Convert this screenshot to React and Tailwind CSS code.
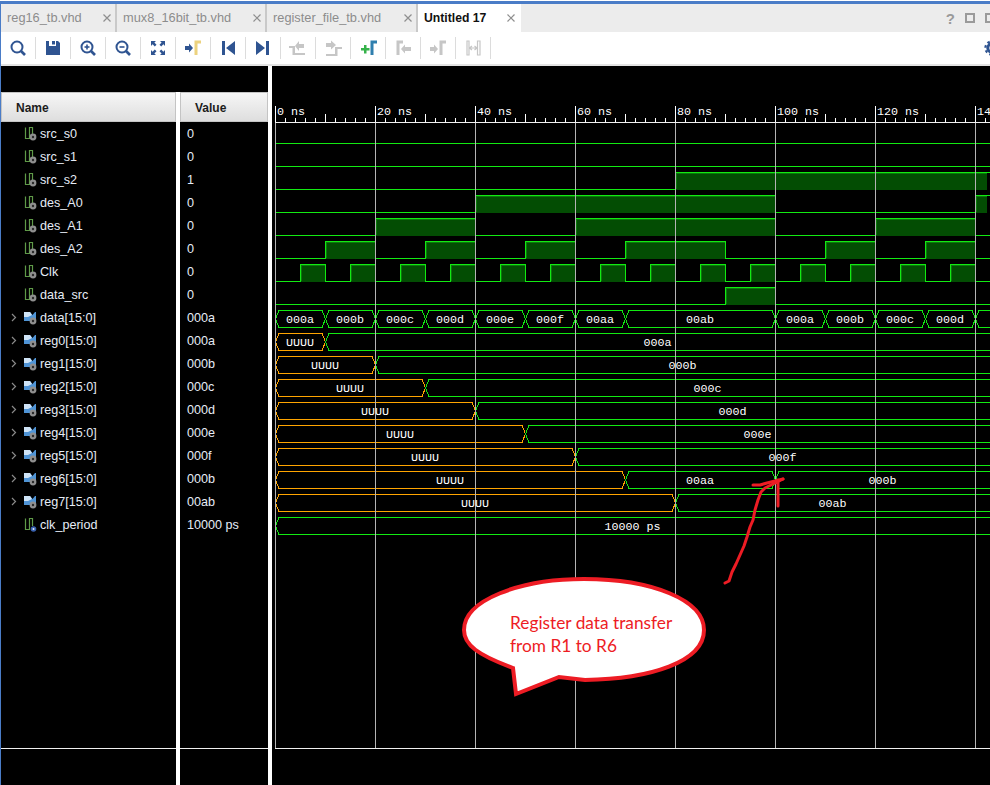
const BLUE = '#2f5491';
const GREY = '#c6c6c6';
const GREEN = '#12ea12';
const ORANGE = '#ffa500';
const FILL = '#034d03';
const EDGE = '#0a7a0a';
const X_END = 990;

const names = ['src_s0', 'src_s1', 'src_s2', 'des_A0', 'des_A1', 'des_A2', 'Clk', 'data_src', 'data[15:0]', 'reg0[15:0]', 'reg1[15:0]', 'reg2[15:0]', 'reg3[15:0]', 'reg4[15:0]', 'reg5[15:0]', 'reg6[15:0]', 'reg7[15:0]', 'clk_period'];
const values = ['0', '0', '1', '0', '0', '0', '0', '0', '000a', '000a', '000b', '000c', '000d', '000e', '000f', '000b', '00ab', '10000 ps'];

const clkHighs = [300, 350, 400, 450, 500, 550, 600, 650, 700, 750, 800, 850, 900, 950].map(a => [a, a + 25]);

const bitRows = [
  { row: 0, highs: [] },
  { row: 1, highs: [] },
  { row: 2, highs: [[675, 987]] },
  { row: 3, highs: [[475, 775], [975, 987]] },
  { row: 4, highs: [[375, 475], [575, 775], [875, 975]] },
  { row: 5, highs: [[325, 375], [425, 475], [525, 575], [625, 725], [825, 875], [925, 975]] },
  { row: 6, highs: clkHighs },
  { row: 7, highs: [[725, 775]] },
];

const busRows = [
  { row: 8, segs: [[275, 325, '000a'], [325, 375, '000b'], [375, 425, '000c'], [425, 475, '000d'], [475, 525, '000e'], [525, 575, '000f'], [575, 625, '00aa'], [625, 775, '00ab'], [775, 825, '000a'], [825, 875, '000b'], [875, 925, '000c'], [925, 975, '000d'], [975, 990, '']] },
  { row: 9, segs: [[275, 325, 'UUUU'], [325, 990, '000a']] },
  { row: 10, segs: [[275, 375, 'UUUU'], [375, 990, '000b']] },
  { row: 11, segs: [[275, 425, 'UUUU'], [425, 990, '000c']] },
  { row: 12, segs: [[275, 475, 'UUUU'], [475, 990, '000d']] },
  { row: 13, segs: [[275, 525, 'UUUU'], [525, 990, '000e']] },
  { row: 14, segs: [[275, 575, 'UUUU'], [575, 990, '000f']] },
  { row: 15, segs: [[275, 625, 'UUUU'], [625, 775, '00aa'], [775, 990, '000b']] },
  { row: 16, segs: [[275, 675, 'UUUU'], [675, 990, '00ab']] },
  { row: 17, segs: [[275, 990, '10000 ps']] },
];

function lowY(row) {
  return 143.5 + row * 23;
}

function BitSignal({ row, highs }) {
  const low = lowY(row);
  const high = low - 17;
  let d = `M275 ${low}`;
  highs.forEach(([a, b]) => {
    const end = b === 987 ? X_END : b;
    d += ` L${a + 0.5} ${low} L${a + 0.5} ${high} L${end + 0.5} ${high}`;
    if (end !== X_END) d += ` L${end + 0.5} ${low}`;
  });
  if (!highs.length || highs[highs.length - 1][1] !== 987) d += ` L${X_END} ${low}`;
  return (
    <g>
      {highs.map(([a, b]) => (
        <g key={a}>
          <rect x={a} y={high} width={b - a} height={17} fill={FILL} />
          <path d={`M${a + 1.5} ${low - 1} V${high + 1} H${b}`} fill="none" stroke={EDGE} />
        </g>
      ))}
      <path d={d} fill="none" stroke={GREEN} strokeWidth="1" />
    </g>
  );
}

function BusSignal({ row, segs }) {
  const low = lowY(row);
  const high = low - 17;
  const mid = low - 8.5;
  return (
    <g>
      {segs.map(([a, b, label]) => {
        const color = label === 'UUUU' ? ORANGE : GREEN;
        const left = a === 275 ? 279 : a + 4;
        const right = b >= X_END ? b : b - 3;
        const close = b >= X_END ? '' : ` L${b + 0.5} ${mid} L${right} ${low}`;
        return (
          <path
            key={a}
            d={`M${right} ${high} L${left} ${high} L${a + 0.5} ${mid} L${left} ${low} L${right} ${low} M${right} ${high}${close}`}
            fill="none"
            stroke={color}
            strokeWidth="1"
          />
        );
      })}
    </g>
  );
}

function BusLabels({ row, segs }) {
  const y = lowY(row) - 5;
  return segs.map(([a, b, label]) => (
    <text key={a} x={(a + b) / 2} y={y} textAnchor="middle" fill="#fff" fontSize="11.7" fontFamily="'Liberation Mono', monospace">
      {label}
    </text>
  ));
}

function Ruler() {
  const ticks = [];
  for (let x = 275; x < 990; x += 10) {
    const pos = x - 275;
    if (pos % 100 === 0) continue;
    ticks.push(<line key={x} x1={x + 0.5} x2={x + 0.5} y1={pos % 50 === 0 ? 114 : 118} y2={122} stroke="#fff" />);
  }
  const marks = [0, 20, 40, 60, 80, 100, 120, 140];
  return (
    <g>
      <line x1="275" x2="990" y1="122.5" y2="122.5" stroke="#f2f2f2" />
      {ticks}
      {marks.map(ns => (
        <g key={ns}>
          <line x1={275.5 + ns * 5} x2={275.5 + ns * 5} y1="106" y2="122" stroke="#fff" />
          <text x={277 + ns * 5} y="115" fill="#fff" fontSize="11.7" fontFamily="'Liberation Mono', monospace">
            {ns === 140 ? '14' : `${ns} ns`}
          </text>
        </g>
      ))}
    </g>
  );
}

function WaveView() {
  const grid = [0, 20, 40, 60, 80, 100, 120, 140];
  return (
    <svg viewBox="272 66 718 719" className="w-[718px] h-[719px] shrink-0 bg-black block" shapeRendering="crispEdges">
      {bitRows.map(s => <BitSignal key={s.row} {...s} />)}
      {busRows.map(s => <BusSignal key={s.row} {...s} />)}
      {grid.map(ns => (
        <line key={ns} x1={275.5 + ns * 5} x2={275.5 + ns * 5} y1="123" y2="748" stroke="#b4b4b4" />
      ))}
      <line x1="275" x2="990" y1="748.5" y2="748.5" stroke="#f0f0f0" />
      <Ruler />
      <g shapeRendering="auto">
        {busRows.map(s => <BusLabels key={s.row} {...s} />)}

        {/* hand drawn arrow + callout */}
        <g fill="none" stroke="#ed1c24" strokeWidth="3" strokeLinecap="round" strokeLinejoin="round">
          <path d="M725 583 L729 581 L732 572 L736 564 L740 555 L744 546 L747 537 L750 527 L753 520 L755 510 L758 500 L761 492 L765 488 L771 485 L783 479" />
          <path d="M753 485 L760 485 L767 483 L775 481 L783 479" />
          <path d="M778 480 L778 506" />
        </g>
        <path
          d="M513 668 C478 655 464 645 464 630 C464 600 520 579 584 579 C652 579 704 600 704 630 C704 662 650 679 585 680 L559 677 L516 694 Z"
          fill="#fff"
          stroke="#ed1c24"
          strokeWidth="4"
          strokeLinejoin="miter"
        />
        <text x="510" y="629" fill="#ed1c24" fontSize="17.3" fontFamily="Lato, sans-serif">Register data transfer</text>
        <text x="510" y="652" fill="#ed1c24" fontSize="17.3" fontFamily="Lato, sans-serif">from R1 to R6</text>
      </g>
    </svg>
  );
}

function Gear({ cx, cy }) {
  return (
    <g>
      <circle cx={cx} cy={cy} r="3.4" fill="#8f8f8f" />
      <circle cx={cx} cy={cy} r="1.2" fill="#2a2a2a" />
    </g>
  );
}

function BitIcon({ dot }) {
  return (
    <svg width="13" height="14" viewBox="0 0 13 14" className="shrink-0">
      <path d="M1.5 0.5 V11.5 H5.5 V0.5 H8.5 V8" fill="none" stroke="#5f9a48" strokeWidth="1.2" />
      {dot ? (
        <g>
          <circle cx="9.5" cy="11" r="2.8" fill="#3a62b0" />
          <circle cx="9.5" cy="11" r="1" fill="#dfe8f8" />
        </g>
      ) : (
        <Gear cx={9} cy={10} />
      )}
    </svg>
  );
}

function BusIcon() {
  return (
    <svg width="13" height="14" viewBox="0 0 13 14" className="shrink-0">
      <path d="M0 1 H6 L8.5 4 L11 1 H12 V10 H0 Z" fill="#4f94d6" />
      <path d="M0 1 H6 L8 4 L4 6 H0 Z" fill="#cfe4f7" />
      <Gear cx={9} cy={10} />
    </svg>
  );
}

function Chevron() {
  return (
    <svg width="6" height="9" viewBox="0 0 6 9" className="shrink-0">
      <path d="M1 1 L4.5 4.5 L1 8" fill="none" stroke="#8a8a8a" strokeWidth="1.2" />
    </svg>
  );
}

function NameRow({ name, index }) {
  const isBus = index >= 8 && index <= 16;
  return (
    <div className="h-[23px] flex items-center text-[12.6px] text-[#e6ecf6]">
      <div className="w-[23px] pl-[10px] shrink-0">{isBus && <Chevron />}</div>
      <div className="w-[16px] shrink-0">
        {isBus ? <BusIcon /> : <BitIcon dot={index === 17} />}
      </div>
      <span className="pt-px">{name}</span>
    </div>
  );
}

function ColumnHeader({ children, pad }) {
  return (
    <div className={`h-[30px] shrink-0 flex items-center pt-px ${pad} border border-[#c4c4c4] bg-gradient-to-b from-[#f6f6f6] to-[#dedede] text-[12px] font-bold text-[#1c1c1c]`}>
      {children}
    </div>
  );
}

function CloseX() {
  return (
    <svg width="8" height="8" viewBox="0 0 8 8" className="shrink-0">
      <path d="M0.5 0.5 L7.5 7.5 M7.5 0.5 L0.5 7.5" stroke="#8f8f8f" strokeWidth="1.2" />
    </svg>
  );
}

function Tab({ label, width, active }) {
  return (
    <div className={`h-full flex items-center justify-between pl-[6px] ${width} ${active ? 'pr-[6px] bg-white text-[12.2px] font-bold text-[#111]' : 'pr-[4px] border-r-2 border-[#c9c9c9] text-[12.8px] font-medium text-[#8c8c8c]'}`}>
      <span>{label}</span>
      <CloseX />
    </div>
  );
}

function Tool({ children }) {
  return (
    <div className="w-[35px] h-[22px] flex items-center justify-center border-r border-[#dcdcdc] shrink-0">
      <svg width="24" height="20" viewBox="0 0 24 20">{children}</svg>
    </div>
  );
}

function Lens({ sign }) {
  return (
    <g fill="none" stroke={BLUE}>
      <circle cx="11" cy="9" r="5.5" strokeWidth="2" />
      <path d="M15 13 L19 17" strokeWidth="2.6" />
      {sign && <path d="M8.5 9 H13.5" strokeWidth="1.6" />}
      {sign === 'plus' && <path d="M11 6.5 V11.5" strokeWidth="1.6" />}
    </g>
  );
}

function Toolbar() {
  return (
    <div className="h-[32px] bg-white flex items-center shrink-0">
      <Tool><Lens /></Tool>
      <Tool>
        <path d="M5 3 H8 V8 H15 V3 H17 L19 5 V17 H5 Z M11 3 H14 V6.5 H11 Z" fill={BLUE} />
      </Tool>
      <Tool><Lens sign="plus" /></Tool>
      <Tool><Lens sign="minus" /></Tool>
      <Tool>
        <path d="M5 3 H10 L8.4 4.6 L10.5 6.8 L8.8 8.4 L6.6 6.2 L5 8 Z M19 3 H14 L15.6 4.6 L13.5 6.8 L15.2 8.4 L17.4 6.2 L19 8 Z M5 17 H10 L8.4 15.4 L10.5 13.2 L8.8 11.6 L6.6 13.8 L5 12 Z M19 17 H14 L15.6 15.4 L13.5 13.2 L15.2 11.6 L17.4 13.8 L19 12 Z" fill={BLUE} />
      </Tool>
      <Tool>
        <path d="M4 8 H8 V5.5 L12 10 L8 14.5 V12 H4 Z" fill={BLUE} />
        <path d="M15 17 V4 H20" fill="none" stroke="#ecd27e" strokeWidth="3" />
      </Tool>
      <Tool>
        <path d="M6 3 H9 V17 H6 Z M19 3 V17 L10 10 Z" fill={BLUE} />
      </Tool>
      <Tool>
        <path d="M5 3 V17 L14 10 Z M15 3 H18 V17 H15 Z" fill={BLUE} />
      </Tool>
      <Tool>
        <path d="M3 8 H9 V15 H19 V17 H6.5 V10 H3 Z M13 3 V6 H18 V10 H13 V13 L9 8 Z" fill={GREY} />
      </Tool>
      <Tool>
        <path d="M5 15 H14 V8 H21 V10 H16.5 V17 H5 Z M5 4 H10 V1.5 L15 6 L10 10.5 V8 H5 Z" fill={GREY} transform="translate(0 1)" />
      </Tool>
      <Tool>
        <path d="M5 10 H8 V7 H10.5 V10 H13.5 V12.5 H10.5 V15.5 H8 V12.5 H5 Z" fill="#35b24a" />
        <path d="M16 17 V4 H21" fill="none" stroke="#2f7fae" strokeWidth="3" />
      </Tool>
      <Tool>
        <path d="M7 17 V4 H12" fill="none" stroke={GREY} strokeWidth="3" />
        <path d="M20 8 H14 V5.5 L10 10 L14 14.5 V12 H20 Z" fill={GREY} transform="translate(0 1)" />
      </Tool>
      <Tool>
        <path d="M4 9 H8 V6.5 L12 11 L8 15.5 V13 H4 Z" fill={GREY} />
        <path d="M15 17 V4 H20" fill="none" stroke={GREY} strokeWidth="3" />
      </Tool>
      <Tool>
        <path d="M6 3 H8 V17 H6 Z M16.5 3 H19 V17 H16.5 Z M8.5 10 H16 M8.5 10 L11 8 M8.5 10 L11 12 M16 10 L13.5 8 M16 10 L13.5 12" fill="none" stroke={GREY} strokeWidth="1.2" />
      </Tool>
      <svg width="20" height="20" viewBox="0 0 20 20" className="ml-auto mr-[-12px] shrink-0">
        <circle cx="10" cy="10" r="4.2" fill="none" stroke={BLUE} strokeWidth="3" />
        <circle cx="10" cy="10" r="6.6" fill="none" stroke={BLUE} strokeWidth="2.2" strokeDasharray="2.6 2.6" />
      </svg>
    </div>
  );
}

export default function App() {
  return (
    <div className="w-[990px] h-[785px] overflow-hidden bg-white flex flex-col font-['Liberation_Sans',sans-serif]">
      <div className="h-px bg-white shrink-0" />
      <div className="h-[3px] bg-[#4a7cc7] shrink-0" />
      <div className="flex-1 flex flex-col border-l border-[#4a7cc7] min-h-0">
        <div className="h-[28px] bg-[#ececec] flex items-center shrink-0">
          <Tab label="reg16_tb.vhd" width="w-[116px]" />
          <Tab label="mux8_16bit_tb.vhd" width="w-[150px]" />
          <Tab label="register_file_tb.vhd" width="w-[151px]" />
          <Tab label="Untitled 17" width="w-[103px]" active />
          <div className="ml-auto flex items-center gap-[10px] mr-[-5px]">
            <span className="text-[15px] font-bold text-[#9a9a9a] leading-none">?</span>
            <div className="w-[10px] h-[10px] border-2 border-[#9a9a9a]" />
            <div className="w-[10px] h-[10px] border-2 border-[#9a9a9a]" />
          </div>
        </div>
        <Toolbar />
        <div className="h-[2px] bg-[#e4e4e4] shrink-0" />
        <div className="flex-1 flex min-h-0">
          <div className="w-[267px] shrink-0 flex flex-col">
            <div className="h-[26px] bg-black shrink-0" />
            <div className="flex-1 flex gap-[4px] min-h-0">
              <div className="w-[175px] bg-black flex flex-col">
                <ColumnHeader pad="pl-[14px]">Name</ColumnHeader>
                <div className="flex-1">
                  {names.map((name, i) => <NameRow key={name} name={name} index={i} />)}
                </div>
                <div className="h-[37px] border-t border-[#f0f0f0] shrink-0" />
              </div>
              <div className="w-[88px] bg-black flex flex-col">
                <ColumnHeader pad="pl-[14px]">Value</ColumnHeader>
                <div className="flex-1 pl-[7px]">
                  {values.map((v, i) => (
                    <div key={i} className="h-[23px] flex items-center pt-px text-[12.6px] text-[#e6ecf6]">{v}</div>
                  ))}
                </div>
                <div className="h-[37px] border-t border-[#f0f0f0] shrink-0" />
              </div>
            </div>
          </div>
          <div className="w-[4px] shrink-0" />
          <WaveView />
        </div>
      </div>
    </div>
  );
}
